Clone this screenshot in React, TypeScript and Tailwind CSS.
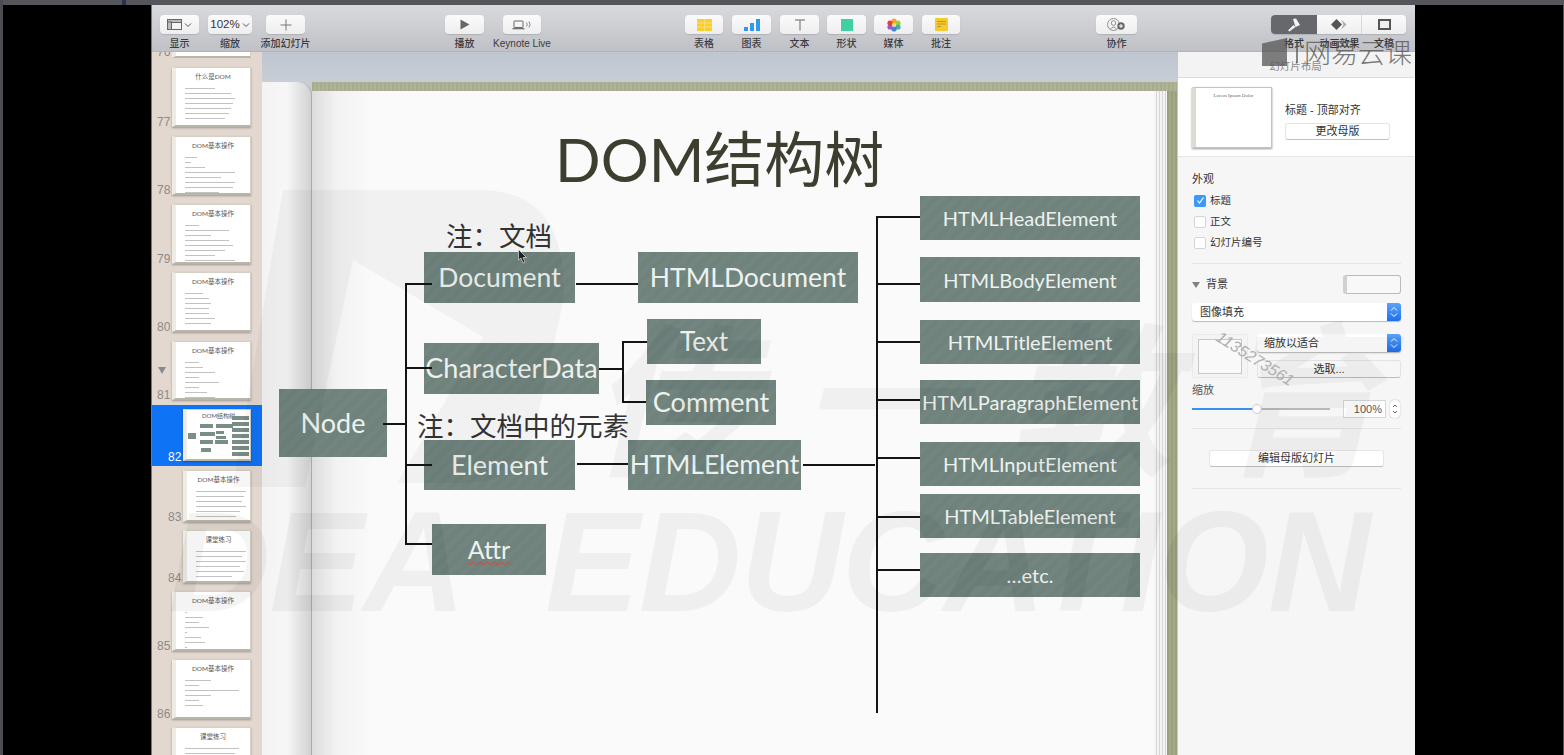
import React from "react";

const CJK = "font-['Lato','Noto_Sans_CJK_SC',sans-serif]";
const UI = "font-['Liberation_Sans','Noto_Sans_CJK_SC',sans-serif]";

function Btn({ className = "", children }: { className?: string; children?: React.ReactNode }) {
  return (
    <div className={`h-[19px] shrink-0 rounded-[4px] bg-gradient-to-b from-[#fbfbfc] to-[#eeeef0] shadow-[0_1px_1px_rgba(0,0,0,0.12)] flex items-center justify-center ${className}`}>
      {children}
    </div>
  );
}

function Tool({ w, ml, label, children }: { w: string; ml: string; label: string; children?: React.ReactNode }) {
  return (
    <div className={`flex flex-col items-center shrink-0 ${w} ${ml}`}>
      <Btn className="w-full">{children}</Btn>
      <div className="mt-[3px] text-[10px] leading-[14px] font-medium text-[#3c3c3f] whitespace-nowrap">{label}</div>
    </div>
  );
}

function Chev() {
  return (
    <svg width="8" height="6" viewBox="0 0 8 6" className="ml-[2px]">
      <path d="M1 1.5 L4 4.5 L7 1.5" fill="none" stroke="#555" strokeWidth="1" />
    </svg>
  );
}

function Toolbar() {
  return (
    <div className={`h-[47px] shrink-0 flex pt-[10px] bg-gradient-to-b from-[#d9dadd] to-[#bfc1c6] border-b border-[#b4b5b9] ${UI}`}>
      <Tool w="w-[39px]" ml="ml-[8px]" label="显示">
        <svg width="15" height="11" viewBox="0 0 15 11"><rect x="0.5" y="0.5" width="14" height="10" fill="none" stroke="#666" /><rect x="0.5" y="0.5" width="14" height="3" fill="#bbb" stroke="#666" /><rect x="0.5" y="3" width="4" height="7.5" fill="#bbb" stroke="#666" /></svg>
        <Chev />
      </Tool>
      <Tool w="w-[44px]" ml="ml-[9px]" label="缩放">
        <span className="text-[11.5px] text-[#333]">102%</span>
        <Chev />
      </Tool>
      <Tool w="w-[39px]" ml="ml-[14px]" label="添加幻灯片">
        <svg width="12" height="12" viewBox="0 0 12 12"><path d="M6 0.5V11.5M0.5 6H11.5" stroke="#777" strokeWidth="1" /></svg>
      </Tool>
      <Tool w="w-[39px]" ml="ml-[140px]" label="播放">
        <svg width="10" height="11" viewBox="0 0 10 11"><path d="M0.5 0.5 L9.5 5.5 L0.5 10.5Z" fill="#666" /></svg>
      </Tool>
      <Tool w="w-[38px]" ml="ml-[19px]" label="Keynote Live">
        <svg width="20" height="10" viewBox="0 0 20 10"><rect x="2" y="1" width="9" height="6.5" rx="0.5" fill="none" stroke="#666" /><path d="M0.5 8.7H12.5" stroke="#666" strokeWidth="1.2" /><path d="M14.5 2.5Q16 4.5 14.5 6.5M17 1.5Q19 4.5 17 7.5" fill="none" stroke="#777" strokeWidth="0.9" /></svg>
      </Tool>
      <Tool w="w-[38px]" ml="ml-[144px]" label="表格">
        <svg width="15" height="12" viewBox="0 0 15 12"><rect width="15" height="12" fill="#f8cf2e" /><path d="M0 4H15M0 8H15M7.5 0V12" stroke="#fbe58c" strokeWidth="0.8" /></svg>
      </Tool>
      <Tool w="w-[39px]" ml="ml-[9px]" label="图表">
        <svg width="16" height="12" viewBox="0 0 16 12"><rect x="0" y="8" width="4" height="4" fill="#2f9be8" /><rect x="6" y="4" width="4" height="8" fill="#2f9be8" /><rect x="12" y="0" width="4" height="12" fill="#2f9be8" /></svg>
      </Tool>
      <Tool w="w-[39px]" ml="ml-[9px]" label="文本">
        <svg width="12" height="12" viewBox="0 0 12 12"><path d="M1 1H11M6 1V11.5" fill="none" stroke="#666" strokeWidth="1" /></svg>
      </Tool>
      <Tool w="w-[39px]" ml="ml-[8px]" label="形状">
        <div className="w-[12px] h-[12px] bg-[#3fd1a2]" />
      </Tool>
      <Tool w="w-[39px]" ml="ml-[8px]" label="媒体">
        <svg width="14" height="14" viewBox="0 0 14 14">
          <circle cx="7" cy="3" r="2.6" fill="#f6a623" /><circle cx="11" cy="5" r="2.6" fill="#9bcf45" /><circle cx="11" cy="9" r="2.6" fill="#35b6a5" /><circle cx="7" cy="11" r="2.6" fill="#4d7fd8" /><circle cx="3" cy="9" r="2.6" fill="#9a57c5" /><circle cx="3" cy="5" r="2.6" fill="#e23c45" /><circle cx="7" cy="7" r="1.6" fill="#f7e04a" />
        </svg>
      </Tool>
      <Tool w="w-[38px]" ml="ml-[9px]" label="批注">
        <svg width="13" height="13" viewBox="0 0 13 13"><rect width="13" height="13" rx="1" fill="#f6c92e" /><path d="M2 3.5H11M2 6H11M2 8.5H6" stroke="#b8912a" strokeWidth="0.9" /></svg>
      </Tool>
      <Tool w="w-[41px]" ml="ml-[136px]" label="协作">
        <svg width="19" height="13" viewBox="0 0 19 13"><circle cx="6.5" cy="6.5" r="6" fill="none" stroke="#777" strokeWidth="0.8" /><circle cx="6.5" cy="5" r="2.3" fill="none" stroke="#777" strokeWidth="0.8" /><path d="M3.5 11Q6.5 7 9.5 11" fill="none" stroke="#777" strokeWidth="0.8" /><circle cx="14" cy="8" r="3.7" fill="#666" /><path d="M14 6V10M12 8H16" stroke="#fff" strokeWidth="1" /></svg>
      </Tool>
      <div className="ml-[134px] w-[135px] shrink-0 flex flex-col">
        <div className="h-[19px] shrink-0 flex rounded-[4px] overflow-hidden shadow-[0_1px_1px_rgba(0,0,0,0.12)] bg-gradient-to-b from-[#fbfbfc] to-[#eeeef0]">
          <div className="w-[46px] bg-[#67686c] flex items-center justify-center">
            <svg width="14" height="14" viewBox="0 0 14 14"><path d="M6 1 L9 0.5 L13 7 L8.5 9 Z" fill="#f3f3f3" /><path d="M6.5 7 L1 12.5 L2.5 13.5 L8.5 9Z" fill="#f3f3f3" /></svg>
          </div>
          <div className="w-[45px] border-r border-[#d8d8da] flex items-center justify-center">
            <svg width="16" height="11" viewBox="0 0 16 11"><path d="M5.5 0 L11 5.5 L5.5 11 L0 5.5Z" fill="#555" /><path d="M10 0.5 L15.5 5.5 L10 10.5 L12.5 5.5Z" fill="#aaa" /></svg>
          </div>
          <div className="w-[44px] flex items-center justify-center">
            <div className="w-[13px] h-[11px] border-2 border-[#555] bg-[#eee]" />
          </div>
        </div>
        <div className="flex mt-[3px] text-[10px] leading-[14px] font-medium text-[#333]">
          <div className="w-[46px] text-center">格式</div>
          <div className="w-[45px] text-center whitespace-nowrap">动画效果</div>
          <div className="w-[44px] text-center">文稿</div>
        </div>
      </div>
    </div>
  );
}

type Slide = { n: string; mt: string; size: string; title: string; lines: string[]; caret?: boolean; ind?: boolean };

const slides: Slide[] = [
  { n: "77", mt: "mt-[9px]", size: "h-[60px]", title: "什么是DOM", lines: ["w-[30px]", "w-[46px]", "w-[50px]", "w-[48px]", "w-[46px]", "w-[44px]", "w-[40px]"] },
  { n: "78", mt: "mt-[9px]", size: "h-[59px]", title: "DOM基本操作", lines: ["w-[12px]", "w-[6px]", "w-[20px]", "w-[50px]", "w-[36px]", "w-[50px]", "w-[48px]", "w-[34px]"] },
  { n: "79", mt: "mt-[9px]", size: "h-[60px]", title: "DOM基本操作", lines: ["w-[14px]", "w-[44px]", "w-[26px]", "w-[44px]", "w-[48px]", "w-[40px]", "w-[30px]", "w-[50px]"] },
  { n: "80", mt: "mt-[8px]", size: "h-[60px]", title: "DOM基本操作", lines: ["w-[18px]", "w-[24px]", "w-[26px]", "w-[24px]", "w-[24px]", "w-[30px]", "w-[26px]"] },
  { n: "81", mt: "mt-[9px]", size: "h-[59px]", title: "DOM基本操作", lines: ["w-[14px]", "w-[18px]", "w-[30px]", "w-[14px]", "w-[34px]", "w-[14px]", "w-[22px]", "w-[30px]"], caret: true },
  { n: "83", mt: "mt-[4px]", size: "h-[52px]", title: "DOM基本操作", lines: ["w-[50px]", "w-[48px]", "w-[46px]", "w-[50px]", "w-[44px]", "w-[40px]"], ind: true },
  { n: "84", mt: "mt-[8px]", size: "h-[53px]", title: "课堂练习", lines: ["w-[50px]", "w-[46px]", "w-[50px]", "w-[44px]", "w-[48px]", "w-[36px]"], ind: true },
  { n: "85", mt: "mt-[8px]", size: "h-[60px]", title: "DOM基本操作", lines: ["w-[2px]", "w-[18px]", "w-[14px]", "w-[24px]", "w-[2px]", "w-[16px]", "w-[20px]", "w-[2px]", "w-[12px]", "w-[22px]"] },
  { n: "86", mt: "mt-[8px]", size: "h-[60px]", title: "DOM基本操作", lines: ["w-[26px]", "w-[14px]", "w-[54px]", "w-[26px]", "w-[14px]", "w-[18px]"] },
  { n: "", mt: "mt-[8px]", size: "h-[60px]", title: "课堂练习", lines: ["w-[54px]", "w-[50px]", "w-[52px]"] },
];

const frame = "bg-white border border-[#d4d0c6] border-b-2 border-b-[#b9b5a8] border-l-[4px] border-l-[#eeebe4] shadow-[0_1px_2px_rgba(0,0,0,0.3)]";

function Thumb({ s, w }: { s: { title: string; lines: string[] }; w: string }) {
  return (
    <div className={`h-full ${w} shrink-0 ${frame} flex flex-col overflow-hidden pt-[4px] pl-[9px]`}>
      <div className={`text-[6.5px] leading-[10px] text-[#555] text-center whitespace-nowrap -ml-[9px] ${CJK}`}>{s.title}</div>
      <div className="flex flex-col gap-[4px] mt-[6px]">
        {s.lines.map((c, i) => (
          <div key={i} className={`h-[1px] bg-[#c2c2c2] ${c}`} />
        ))}
      </div>
    </div>
  );
}

function MiniDiagram() {
  return (
    <div className={`w-[68px] h-full shrink-0 ${frame} relative overflow-hidden`}>
      <div className={`text-[6px] leading-[10px] pt-[1px] text-center text-[#555] ${CJK}`}>DOM结构树</div>
      <div className="absolute left-[1px] top-[23px] w-[8px] h-[6px] bg-[#7b8d87]" />
      <div className="absolute left-[13px] top-[14px] w-[13px] h-[4px] bg-[#7b8d87]" />
      <div className="absolute left-[13px] top-[22px] w-[15px] h-[4px] bg-[#7b8d87]" />
      <div className="absolute left-[13px] top-[30px] w-[13px] h-[4px] bg-[#7b8d87]" />
      <div className="absolute left-[14px] top-[38px] w-[10px] h-[4px] bg-[#7b8d87]" />
      <div className="absolute left-[29px] top-[14px] w-[17px] h-[4px] bg-[#7b8d87]" />
      <div className="absolute left-[29px] top-[21px] w-[8px] h-[3px] bg-[#7b8d87]" />
      <div className="absolute left-[29px] top-[26px] w-[10px] h-[3px] bg-[#7b8d87]" />
      <div className="absolute left-[28px] top-[30px] w-[13px] h-[4px] bg-[#7b8d87]" />
      <div className="absolute left-[45px] top-[6px] w-[17px] h-[40px] flex flex-col justify-between">
        {[0, 1, 2, 3, 4, 5, 6].map((i) => (
          <div key={i} className="h-[4px] bg-[#7b8d87]" />
        ))}
      </div>
    </div>
  );
}

function SlideRow({ s }: { s: Slide }) {
  return (
    <div className={`${s.mt} ${s.size} flex shrink-0 relative ${s.ind ? "pl-[31px]" : "pl-[20px]"}`}>
      <div className={`absolute bottom-[-2px] text-[12px] leading-[14px] text-[#8a8a88] ${s.ind ? "left-[16px]" : "left-[5px]"}`}>{s.n}</div>
      {s.caret && <div className="absolute left-[6px] top-[26px] w-0 h-0 border-l-[4px] border-r-[4px] border-t-[7px] border-l-transparent border-r-transparent border-t-[#8a8a8a]" />}
      <Thumb s={s} w={s.ind ? "w-[68px]" : "w-[79px]"} />
    </div>
  );
}

function Sidebar() {
  return (
    <div className={`w-[110px] shrink-0 bg-[#e3d8cf] flex flex-col overflow-hidden ${UI}`}>
      <div className="h-[6px] shrink-0 pl-[20px] flex relative">
        <div className="absolute left-[5px] -top-[7px] text-[12px] leading-[14px] text-[#8a8a88]">76</div>
        <div className="w-[79px] h-full bg-white border border-[#d4d0c6] border-b-2 border-b-[#b9b5a8] border-l-[4px] border-l-[#eeebe4] border-t-0" />
      </div>
      {slides.slice(0, 5).map((s) => (
        <SlideRow key={s.n} s={s} />
      ))}
      <div className="mt-[5px] h-[61px] shrink-0 bg-[#0f73f5] flex pl-[31px] pt-[4px] pb-[5px] relative">
        <div className="absolute left-[16px] bottom-[2px] text-[12px] leading-[14px] text-white">82</div>
        <MiniDiagram />
      </div>
      {slides.slice(5).map((s, i) => (
        <SlideRow key={i} s={s} />
      ))}
    </div>
  );
}

type B = { c: string; t: React.ReactNode; f: string };
const boxes: B[] = [
  { c: "left-[17px] top-[337px] w-[108px] h-[68px]", t: "Node", f: "text-[27px]" },
  { c: "left-[162px] top-[200px] w-[151px] h-[51px]", t: "Document", f: "text-[26.5px]" },
  { c: "left-[376px] top-[200px] w-[220px] h-[51px]", t: "HTMLDocument", f: "text-[26.5px]" },
  { c: "left-[385px] top-[267px] w-[114px] h-[45px]", t: "Text", f: "text-[26px]" },
  { c: "left-[384px] top-[328px] w-[130px] h-[45px]", t: "Comment", f: "text-[27px]" },
  { c: "left-[162px] top-[291px] w-[175px] h-[51px]", t: "CharacterData", f: "text-[27px]" },
  { c: "left-[162px] top-[388px] w-[151px] h-[50px]", t: "Element", f: "text-[27px]" },
  { c: "left-[366px] top-[388px] w-[173px] h-[50px]", t: "HTMLElement", f: "text-[26.5px]" },
  { c: "left-[170px] top-[472px] w-[114px] h-[51px]", t: <span className="underline decoration-wavy decoration-[#d8443a] decoration-1 underline-offset-2">Attr</span>, f: "text-[25px]" },
  { c: "left-[658px] top-[144px] w-[220px] h-[44px]", t: "HTMLHeadElement", f: "text-[20px]" },
  { c: "left-[658px] top-[205px] w-[220px] h-[45px]", t: "HTMLBodyElement", f: "text-[20px]" },
  { c: "left-[658px] top-[268px] w-[220px] h-[44px]", t: "HTMLTitleElement", f: "text-[20px]" },
  { c: "left-[658px] top-[328px] w-[220px] h-[44px]", t: "HTMLParagraphElement", f: "text-[20px]" },
  { c: "left-[658px] top-[390px] w-[220px] h-[44px]", t: "HTMLInputElement", f: "text-[20px]" },
  { c: "left-[658px] top-[442px] w-[220px] h-[44px]", t: "HTMLTableElement", f: "text-[20px]" },
  { c: "left-[658px] top-[501px] w-[220px] h-[44px]", t: "…etc.", f: "text-[20px]" },
];

const wires = [
  "left-[143px] top-[231px] w-[2px] h-[262px]",
  "left-[143px] top-[231px] w-[27px] h-[2px]",
  "left-[143px] top-[315px] w-[27px] h-[2px]",
  "left-[121px] top-[371px] w-[24px] h-[2px]",
  "left-[143px] top-[412px] w-[27px] h-[2px]",
  "left-[143px] top-[491px] w-[27px] h-[2px]",
  "left-[314px] top-[231px] w-[62px] h-[2px]",
  "left-[337px] top-[316px] w-[24px] h-[2px]",
  "left-[360px] top-[289px] w-[2px] h-[62px]",
  "left-[360px] top-[289px] w-[25px] h-[2px]",
  "left-[360px] top-[349px] w-[24px] h-[2px]",
  "left-[315px] top-[411px] w-[51px] h-[2px]",
  "left-[541px] top-[412px] w-[72px] h-[2px]",
  "left-[614px] top-[164px] w-[2px] h-[497px]",
  "left-[614px] top-[164px] w-[44px] h-[2px]",
  "left-[614px] top-[231px] w-[44px] h-[2px]",
  "left-[614px] top-[289px] w-[44px] h-[2px]",
  "left-[614px] top-[347px] w-[44px] h-[2px]",
  "left-[614px] top-[405px] w-[44px] h-[2px]",
  "left-[614px] top-[464px] w-[44px] h-[2px]",
  "left-[614px] top-[517px] w-[44px] h-[2px]",
];

function Canvas() {
  return (
    <div className="flex-1 relative flex flex-col overflow-hidden bg-[#c5ccd5]">
      <div className="h-[30px] shrink-0 bg-gradient-to-b from-[#bfc6cf] to-[#c8ced6]" />
      <div className="flex-1 flex min-h-0">
        <div className="w-[50px] shrink-0 rounded-tr-[14px] bg-gradient-to-r from-[#f3f3f3] via-[#f7f7f7] to-[#d2d2d2] border-r border-[#aaa]" />
        <div className="flex-1 flex flex-col min-w-0">
          <div className="h-[9px] shrink-0 bg-[repeating-linear-gradient(90deg,#a7ac8d_0px,#a7ac8d_2px,#afb397_2px,#afb397_4px)]" />
          <div className="flex-1 flex min-h-0">
            <div className="flex-1 bg-[linear-gradient(90deg,#dcdcdc_0px,#f2f2f2_24px,#fafafa_60px)]" />
            <div className="w-[13px] shrink-0 bg-[repeating-linear-gradient(90deg,#f4f4f4_0px,#f4f4f4_2px,#d6d6d6_2px,#d6d6d6_3px)]" />
            <div className="w-[10px] shrink-0 bg-[repeating-linear-gradient(90deg,#9aa07d_0px,#9aa07d_2px,#a3a888_2px,#a3a888_4px)]" />
          </div>
        </div>
      </div>
      {/* the slide diagram */}
      <div className={`absolute inset-0 ${CJK}`}>
        <div className="absolute left-[293px] top-[67px] text-[60px] leading-[80px] text-[#3d3d30] whitespace-nowrap">DOM结构树</div>
        <div className="absolute left-[184px] top-[165px] text-[26.5px] leading-[38px] text-[#333] whitespace-nowrap">注：文档</div>
        <div className="absolute left-[155px] top-[355px] text-[26.5px] leading-[38px] text-[#333] whitespace-nowrap">注：文档中的元素</div>
        {boxes.map((b) => (
          <div key={b.c} className={`absolute ${b.c} ${b.f} flex items-center justify-center text-[#eef2ef] whitespace-nowrap bg-[repeating-linear-gradient(135deg,#6f827c_0px,#6f827c_5px,#72857f_5px,#72857f_10px)]`}>
            {b.t}
          </div>
        ))}
        {wires.map((c) => (
          <div key={c} className={`absolute bg-[#141414] ${c}`} />
        ))}
        <svg className="absolute left-[256px] top-[197px]" width="11" height="15" viewBox="0 0 11 15">
          <path d="M0.5 0.5 L0.5 11 L3 9 L5 14 L7 13 L5 8.5 L8.5 8.5Z" fill="#222" stroke="#fff" strokeWidth="0.6" />
        </svg>
      </div>
    </div>
  );
}

function Check({ on, label }: { on?: boolean; label: string }) {
  return (
    <div className="flex items-center h-[21px] gap-[4px]">
      <div className={`w-[12px] h-[12px] rounded-[2px] flex items-center justify-center ${on ? "bg-[#3b99fc]" : "bg-white border border-[#d4d4d4]"}`}>
        {on && (
          <svg width="9" height="9" viewBox="0 0 9 9"><path d="M1.5 4.5 L3.5 7 L7.5 1.5" fill="none" stroke="#fff" strokeWidth="1.2" /></svg>
        )}
      </div>
      <span className="text-[10.5px] text-[#333]">{label}</span>
    </div>
  );
}

function Updown() {
  return (
    <div className="w-[14px] h-full bg-gradient-to-b from-[#5aa3fb] to-[#1a70f0] flex items-center justify-center">
      <svg width="8" height="12" viewBox="0 0 8 12"><path d="M1 4.5L4 1.5L7 4.5M1 7.5L4 10.5L7 7.5" fill="none" stroke="#fff" strokeWidth="1" /></svg>
    </div>
  );
}

function Inspector() {
  return (
    <div className={`w-[238px] shrink-0 bg-[#f6f6f7] border-l border-[#c8c8c8] flex flex-col ${UI}`}>
      <div className="h-[26px] shrink-0 bg-[#f3f3f4] border-b border-[#dcdcdc] flex items-end justify-center pb-[5px] text-[10.5px] leading-[12px] text-[#8a8a8a]">
        <span className="ml-[-2px]">幻灯片布局</span>
      </div>
      <div className="h-[79px] shrink-0 bg-white border-b border-[#e6e6e6] flex pt-[9px] pl-[14px]">
        <div className="w-[80px] h-[61px] bg-white border border-[#c5c2b8] border-l-[4px] border-l-[#dedbd2] shadow-[0_1px_2px_rgba(0,0,0,0.4)] text-center text-[5px] leading-[8px] pt-[4px] text-[#666] font-['Liberation_Serif',serif]">Lorem Ipsum Dolor</div>
        <div className="ml-[13px] w-[105px] pt-[15px]">
          <div className="text-[11px] leading-[16px] text-[#333] whitespace-nowrap">标题 - 顶部对齐</div>
          <div className="mt-[5px] h-[17px] rounded-[3px] bg-white border border-[#e4e4e4] border-b-[#c2c2c2] text-[11px] leading-[15px] text-center text-[#333]">更改母版</div>
        </div>
      </div>
      <div className="flex-1 px-[14px] pt-[15px]">
        <div className="text-[11px] leading-[14px] text-[#333]">外观</div>
        <div className="mt-[4px] pl-[2px]">
          <Check on label="标题" />
          <Check label="正文" />
          <Check label="幻灯片编号" />
        </div>
        <div className="mt-[10px] h-[1px] bg-[#e4e4e4]" />
        <div className="mt-[11px] h-[19px] flex items-center justify-between">
          <div className="flex items-center gap-[6px]">
            <div className="w-0 h-0 border-l-[4px] border-r-[4px] border-t-[6px] border-l-transparent border-r-transparent border-t-[#808080]" />
            <span className="text-[11px] text-[#333]">背景</span>
          </div>
          <div className="w-[58px] h-[19px] rounded-[3px] border border-[#bbb] border-l-[4px] border-l-[#d0d0d0] bg-[#f8f8f8]" />
        </div>
        <div className="mt-[9px] h-[18px] rounded-[3px] overflow-hidden bg-white shadow-[0_1px_1px_rgba(0,0,0,0.25)] flex justify-between items-center pl-[8px] text-[11px] text-[#333]">
          <span>图像填充</span>
          <Updown />
        </div>
        <div className="mt-[13px] flex h-[44px]">
          <div className="w-[56px] h-[44px] shrink-0 bg-[#f4f4f4] border border-[#ebebeb] rounded-[2px] flex items-center justify-center">
            <div className="w-[44px] h-[35px] bg-[#f9f9f9] border border-[#c8c8c8]" />
          </div>
          <div className="ml-[9px] flex-1 flex flex-col justify-between">
            <div className="h-[18px] rounded-[3px] overflow-hidden bg-white shadow-[0_1px_1px_rgba(0,0,0,0.25)] flex justify-between items-center pl-[7px] text-[11px] text-[#333]">
              <span>缩放以适合</span>
              <Updown />
            </div>
            <div className="h-[18px] rounded-[3px] bg-[#f6f6f6] border border-[#e2e2e2] border-b-[#bdbdbd] text-center text-[11px] leading-[16px] text-[#333]">选取...</div>
          </div>
        </div>
        <div className="mt-[5px] text-[11px] leading-[14px] text-[#555]">缩放</div>
        <div className="mt-[3px] h-[18px] flex items-center">
          <div className="w-[138px] h-[2px] bg-[#b9b9b9] relative">
            <div className="h-full w-[65px] bg-[#3b8ff0]" />
            <div className="absolute left-[60px] -top-[4px] w-[10px] h-[10px] rounded-full bg-white border border-[#c9c9c9]" />
          </div>
          <div className="ml-[13px] w-[43px] h-[18px] bg-white border border-[#d5d5d5] text-right pr-[3px] text-[11px] leading-[16px] text-[#555]">100%</div>
          <div className="ml-[4px] w-[10px] h-[18px] rounded-[4px] bg-white shadow-[0_0_1px_rgba(0,0,0,0.5)] flex items-center justify-center">
            <svg width="6" height="12" viewBox="0 0 6 12"><path d="M1 4L3 2L5 4M1 8L3 10L5 8" fill="none" stroke="#555" strokeWidth="0.9" /></svg>
          </div>
        </div>
        <div className="mt-[10px] h-[1px] bg-[#e4e4e4]" />
        <div className="mt-[21px] mx-[17px] h-[17px] rounded-[3px] bg-white border border-[#e6e6e6] border-b-[#bfbfbf] text-center text-[11px] leading-[15px] text-[#333]">编辑母版幻灯片</div>
        <div className="mt-[21px] h-[1px] bg-[#e4e4e4]" />
      </div>
    </div>
  );
}

function Watermarks() {
  return (
    <>
      <div className="absolute left-[590px] top-[292px] text-[165px] leading-[200px] tracking-[44px] font-bold italic text-black/[0.04] whitespace-nowrap font-['Noto_Sans_CJK_SC',sans-serif]">传一教育</div>
      <div className="absolute left-[168px] top-[482px] text-[142px] leading-[160px] tracking-[-1px] font-bold italic text-black/[0.045] whitespace-nowrap font-['Liberation_Sans',sans-serif]">DEA</div>
      <div className="absolute left-[545px] top-[482px] text-[142px] leading-[160px] tracking-[-1px] font-bold italic text-black/[0.045] whitespace-nowrap font-['Liberation_Sans',sans-serif]">EDUCATION</div>
      <svg className="absolute left-[220px] top-[180px]" width="360" height="320" viewBox="0 0 360 320">
        <path d="M63 10 H260 Q350 10 343 123 L313 257 Q305 303 240 303 H177 L263 157 L133 80 L85 307 H13 Z" fill="rgba(0,0,0,0.035)" />
      </svg>
      <div className="absolute left-[1211px] top-[347px] rotate-[32deg] text-[16px] italic text-[#b0b0b0] font-['Liberation_Sans',sans-serif]">1135273561</div>
      <div className="absolute left-[1262px] top-[36px] flex items-center text-[#555]/80">
        <div className="w-[25px] h-[28px] bg-[#555]/75 [clip-path:polygon(0_20%,100%_0,100%_100%,0_100%)]" />
        <div className="ml-[9px] w-[2px] h-[22px] bg-[#555]/70" />
        <span className="ml-[6px] text-[27px] leading-[32px] font-['Noto_Sans_CJK_SC',sans-serif] font-light whitespace-nowrap">网易云课</span>
      </div>
    </>
  );
}

export default function App() {
  return (
    <div className="relative w-[1564px] h-[755px] bg-black overflow-hidden">
      <div className="h-[5px] bg-[#55565b]" />
      <div className="absolute left-[122px] top-0 w-[4px] h-[5px] bg-[#2c3350]" />
      <div className="absolute left-0 top-0 bottom-0 w-[3px] bg-[#4c4d52]" />
      <div className="absolute left-[151px] top-[5px] w-[1264px] h-[750px] flex flex-col border-l border-[#777]">
        <Toolbar />
        <div className="flex-1 flex min-h-0">
          <Sidebar />
          <Canvas />
          <Inspector />
        </div>
      </div>
      <div className="absolute right-0 top-0 bottom-0 w-[1px] bg-[#555]" />
      <Watermarks />
    </div>
  );
}
